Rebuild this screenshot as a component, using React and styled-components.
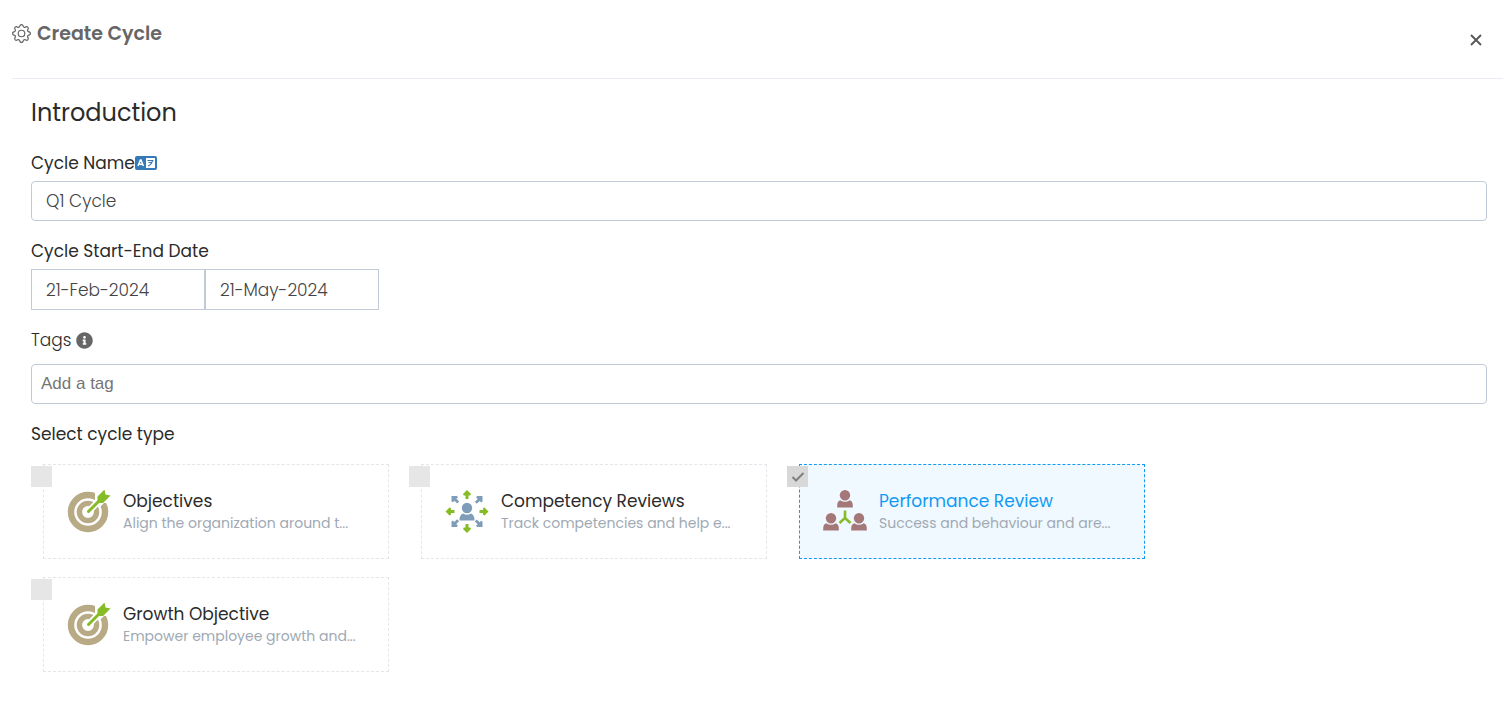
import React, { useState } from "react";
import styled, { createGlobalStyle, css } from "styled-components";
import { BsGear } from "react-icons/bs";
import { FaInfoCircle } from "react-icons/fa";

const GlobalStyle = createGlobalStyle`
  * {
    box-sizing: border-box;
  }

  body {
    margin: 0;
    background-color: #ffffff;
    color: #2b2b2b;
    font-family: Poppins, Inter, sans-serif;
    font-size: 17px;
  }
`;

const Page = styled.div`
  padding: 0 8px 40px 12px;
`;

const Header = styled.header`
  display: flex;
  justify-content: space-between;
  height: 79px;
  padding: 18px 15px 0 0;
  border-bottom: 1px solid #e9edf3;
`;

const Title = styled.h1`
  display: flex;
  align-items: center;
  gap: 6px;
  height: 30px;
  margin: 0;
  color: #666666;
  font-size: 19px;
  font-weight: 600;
`;

const CloseButton = styled.button`
  display: flex;
  align-items: center;
  justify-content: center;
  width: 24px;
  height: 24px;
  margin-top: 10px;
  padding: 0;
  border: none;
  background: none;
  color: #555555;
  cursor: pointer;
`;

const Form = styled.form`
  display: flex;
  flex-direction: column;
  gap: 18px;
  padding: 16px 16px 0 19px;
`;

const SectionTitle = styled.h2`
  margin: 0 0 2px;
  font-size: 24px;
  font-weight: 400;
  line-height: 36px;
`;

const Field = styled.div`
  display: flex;
  flex-direction: column;
  gap: ${(props) => (props.$loose ? "12px" : "6px")};
`;

const LabelRow = styled.div`
  display: flex;
  align-items: center;
  gap: ${(props) => (props.$light ? "5px" : "0")};
  height: 24px;
  font-weight: ${(props) => (props.$light ? 300 : 400)};
  line-height: 24px;

  .info {
    color: #666666;
  }
`;

const TextInput = styled.input`
  width: 100%;
  height: 40px;
  padding: 0 14px;
  border: 1px solid #c2cad8;
  border-radius: 4px;
  color: #444444;
  font-family: inherit;
  font-size: 17px;
  font-weight: 300;
  outline: none;
`;

const TagInput = styled(TextInput)`
  padding: 0 9px;
  font-family: "Liberation Sans", Arial, sans-serif;
  font-weight: 400;

  &::placeholder {
    color: #757575;
  }
`;

const DateRange = styled.div`
  display: flex;
`;

const DateInput = styled(TextInput)`
  width: 174px;
  height: 41px;
  border-radius: 0;
`;

const TypeGroup = styled.fieldset`
  display: flex;
  flex-wrap: wrap;
  gap: 18px 20px;
  min-width: 0;
  margin: 0;
  padding: 0;
  border: none;
`;

const Legend = styled.legend`
  margin-bottom: 18px;
  padding: 0;
  line-height: 24px;
`;

const TypeOption = styled.label`
  position: relative;
  width: 358px;
  padding-left: 12px;
  cursor: pointer;
`;

const TypeCard = styled.div`
  display: flex;
  align-items: center;
  gap: 12px;
  height: 95px;
  padding: 0 20px 0 23px;
  border: 1px dashed #e4e6ec;

  svg {
    flex-shrink: 0;
  }

  ${(props) =>
    props.$selected &&
    css`
      border-color: #1299f3;
      background-color: #f0f9ff;
    `}
`;

// Sits over the left edge of the card
const Tick = styled.span`
  position: absolute;
  top: 2px;
  left: 0;
  display: flex;
  align-items: center;
  justify-content: center;
  width: 21px;
  height: 21px;
  background-color: ${(props) => (props.$selected ? "#d8d8d8" : "#e6e6e6")};
`;

const TickInput = styled.input`
  position: absolute;
  inset: 0;
  margin: 0;
  opacity: 0;
`;

const TypeText = styled.div`
  min-width: 0;
`;

const TypeName = styled.div`
  color: ${(props) => (props.$selected ? "#1299f3" : "#2b2b2b")};
  line-height: 22px;
`;

const TypeDescription = styled.div`
  color: #a0a9b4;
  font-size: 14px;
  line-height: 22px;
  white-space: nowrap;
`;

const CloseIcon = () => (
  <svg width="12" height="12" viewBox="0 0 12 12">
    <path
      d="M1 1l10 10M11 1l-10 10"
      stroke="currentColor"
      strokeWidth="1.8"
    />
  </svg>
);

const TranslateIcon = () => (
  <svg width="22" height="14" viewBox="0 0 22 14" fill="none">
    <rect width="22" height="14" rx="2" fill="#337ab7" />
    <path
      d="M3 10l2.400-6h.6l2.400 6M4 8.300h3.400"
      stroke="#ffffff"
      strokeWidth="1.5"
    />
    <rect x="11" y="2" width="9" height="10" fill="#ffffff" />
    <path
      d="M12.500 4.500h6M17.500 4.500q-.8 4-4.500 5.500M13.500 6.500h3"
      stroke="#337ab7"
      strokeWidth="1.2"
    />
  </svg>
);

const CheckIcon = () => (
  <svg width="14" height="12" viewBox="0 0 14 12" fill="none">
    <path d="M1.500 6l3.500 3.500 7.500-7.500" stroke="#808080" strokeWidth="2" />
  </svg>
);

const TargetIcon = () => (
  <svg width="44" height="44" viewBox="0 0 44 44" fill="none">
    <circle cx="21" cy="22" r="17" stroke="#b8aa84" strokeWidth="6.4" />
    <circle cx="21" cy="22" r="8.6" stroke="#b8aa84" strokeWidth="5.4" />
    <path d="M21 22 31 12" stroke="#ffffff" strokeWidth="6.5" />
    <path d="M28 13V3l5-5h11v15h-7l-4 4z" fill="#ffffff" />
    <path
      d="M21.500 21.500 35 8"
      stroke="#86bc25"
      strokeWidth="3"
      strokeLinecap="round"
    />
    <path d="M30.500 13V6.500L37.500-.5l1 5 5 1-7.500 7.500z" fill="#86bc25" />
  </svg>
);

const CompetencyIcon = () => (
  <svg width="44" height="44" viewBox="0 0 44 44">
    <g fill="#7f9db9">
      <circle cx="22" cy="18" r="5.2" />
      <path d="M14.500 30.500c0-4 1-6 3.500-7q4 2.400 8 0c2.500 1 3.500 3 3.500 7z" />
      {[0, 90, 180, 270].map((angle) => (
        <path
          key={angle}
          transform={`rotate(${angle} 22 21.5)`}
          d="M6.500 6H12l1 1.300-1.600 1.500 2.800 2.800-2 2-2.800-2.800-1.500 1.500-1.400-.8z"
        />
      ))}
    </g>
    <g fill="#86bc25">
      {[0, 90, 180, 270].map((angle) => (
        <path
          key={angle}
          transform={`rotate(${angle} 22 21.5)`}
          d="m22 0 4 4-.8 1.500h-1.700V9h-3V5.500h-1.700L18 4z"
        />
      ))}
    </g>
  </svg>
);

const Person = ({ x, y }) => (
  <g transform={`translate(${x} ${y})`} fill="#a47878">
    <circle cx="8" cy="5.2" r="5.2" />
    <path d="M.2 17.500v-2c0-3 1-4.500 3-5.300q4.800 3 9.600 0c2 .8 3 2.300 3 5.300v2z" />
  </g>
);

const PerformanceIcon = () => (
  <svg width="44" height="44" viewBox="0 0 44 44">
    <Person x={14} y={0} />
    <Person x={0} y={23} />
    <Person x={28} y={23} />
    <path
      d="M22 20.500v7.500L16.500 33M22 28l5.500 5"
      fill="none"
      stroke="#86bc25"
      strokeWidth="2.6"
    />
  </svg>
);

const cycleTypes = [
  {
    id: "objectives",
    name: "Objectives",
    description: "Align the organization around t...",
    icon: <TargetIcon />,
  },
  {
    id: "competency",
    name: "Competency Reviews",
    description: "Track competencies and help e...",
    icon: <CompetencyIcon />,
  },
  {
    id: "performance",
    name: "Performance Review",
    description: "Success and behaviour and are...",
    icon: <PerformanceIcon />,
  },
  {
    id: "growth",
    name: "Growth Objective",
    description: "Empower employee growth and...",
    icon: <TargetIcon />,
  },
];

const App = () => {
  const [name, setName] = useState("Q1 Cycle");
  const [startDate, setStartDate] = useState("21-Feb-2024");
  const [endDate, setEndDate] = useState("21-May-2024");
  const [selected, setSelected] = useState(["performance"]);

  // Add or remove a cycle type from the selection
  const toggleType = (id) => {
    setSelected(
      selected.includes(id)
        ? selected.filter((item) => item !== id)
        : [...selected, id]
    );
  };

  return (
    <Page>
      <GlobalStyle />
      <Header>
        <Title>
          <BsGear size={19} /> Create Cycle
        </Title>
        <CloseButton type="button" title="Close">
          <CloseIcon />
        </CloseButton>
      </Header>

      <Form>
        <SectionTitle>Introduction</SectionTitle>

        <Field>
          <LabelRow>
            <label htmlFor="cycle-name">Cycle Name</label>
            <TranslateIcon />
          </LabelRow>
          <TextInput
            id="cycle-name"
            type="text"
            value={name}
            onChange={(e) => setName(e.target.value)}
          />
        </Field>

        <Field>
          <LabelRow>
            <label id="date-label" htmlFor="start-date">
              Cycle Start-End Date
            </label>
          </LabelRow>
          <DateRange>
            <DateInput
              id="start-date"
              type="text"
              value={startDate}
              onChange={(e) => setStartDate(e.target.value)}
            />
            <DateInput
              type="text"
              aria-labelledby="date-label"
              value={endDate}
              onChange={(e) => setEndDate(e.target.value)}
            />
          </DateRange>
        </Field>

        <Field $loose>
          <LabelRow $light>
            <label htmlFor="tags">Tags</label>
            <FaInfoCircle className="info" size={17} />
          </LabelRow>
          <TagInput id="tags" type="text" placeholder="Add a tag" />
        </Field>

        {/* Cycle types */}
        <TypeGroup>
          <Legend>Select cycle type</Legend>
          {cycleTypes.map((type) => {
            const isSelected = selected.includes(type.id);
            return (
              <TypeOption key={type.id}>
                <TypeCard $selected={isSelected}>
                  {type.icon}
                  <TypeText>
                    <TypeName $selected={isSelected}>{type.name}</TypeName>
                    <TypeDescription>{type.description}</TypeDescription>
                  </TypeText>
                </TypeCard>
                <Tick $selected={isSelected}>
                  <TickInput
                    type="checkbox"
                    checked={isSelected}
                    onChange={() => toggleType(type.id)}
                  />
                  {isSelected && <CheckIcon />}
                </Tick>
              </TypeOption>
            );
          })}
        </TypeGroup>
      </Form>
    </Page>
  );
};

export default App;
